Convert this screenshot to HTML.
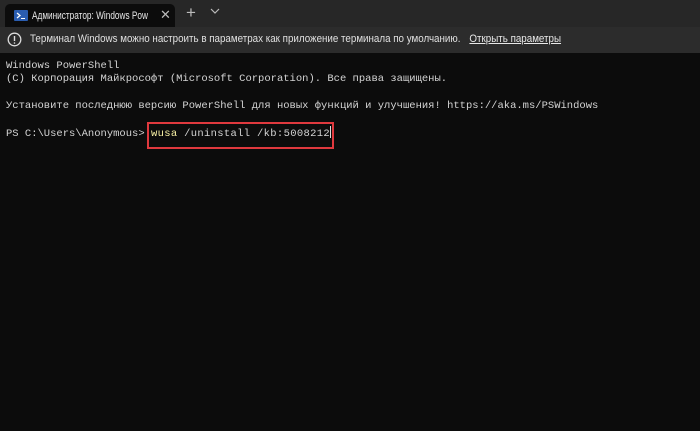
<!DOCTYPE html>
<html><head><meta charset="utf-8"><style>
body{margin:0;width:700px;height:431px;background:#0c0c0c;overflow:hidden;position:relative;font-family:"Liberation Sans","Noto Sans CJK SC",sans-serif}
.tabbar{position:absolute;left:0;top:0;width:700px;height:27px;background:#272727}
.tab{position:absolute;left:5px;top:4px;width:170px;height:23px;background:#0c0c0c;border-radius:5px 5px 0 0}
.tab .t{position:absolute;left:27px;top:6px;font-size:11px;color:#e8e8e8;white-space:nowrap;transform:scaleX(0.75);transform-origin:0 0}
.tab .x{position:absolute;left:155px;top:3px;font-size:13px;color:#bbb}
.plus{position:absolute;left:186px;top:3px;font-size:17px;color:#bbb}
.chev{position:absolute;left:210px;top:8px}
.info{position:absolute;left:0;top:27px;width:700px;height:26px;background:#2c2c2c;font-size:11px;color:#e0e0e0}
.info .m{position:absolute;left:30px;top:6px;white-space:nowrap;transform:scaleX(0.89);transform-origin:0 0}
.info u{color:#e8e8e8;margin-left:7px}
.term{position:absolute;left:6px;top:60px;font-family:"Liberation Mono","Noto Sans CJK SC",monospace;font-size:10.5px;line-height:13.3px;color:#d4d4d4;white-space:pre}
.cmd{letter-spacing:0.33px}
.y{color:#f9f1a5}
.box{position:absolute;left:147px;top:122px;width:183px;height:23px;border:2px solid #e0393e}
.cur{display:inline-block;width:1px;height:12px;background:#ddd;vertical-align:-2px}
</style></head><body>
<div class="tabbar">
 <div class="tab">
  <svg style="position:absolute;left:9px;top:6px" width="14" height="11"><rect width="14" height="11" rx="1" fill="#2a5db0"/><path d="M3 3l3 2.5-3 2.5" stroke="#fff" stroke-width="1.3" fill="none"/><path d="M7 8.5h4" stroke="#fff" stroke-width="1"/></svg>
  <span class="t">Администратор: Windows Pow</span><span class="x">✕</span>
 </div>
 <span class="plus">+</span>
 <svg class="chev" width="10" height="6"><path d="M1 1l4 4 4-4" stroke="#bbb" stroke-width="1.2" fill="none"/></svg>
</div>
<div class="info">
 <svg style="position:absolute;left:7px;top:5px" width="15" height="15"><circle cx="7.5" cy="7.5" r="6.3" stroke="#ddd" stroke-width="1.3" fill="none"/><path d="M7.5 4v5" stroke="#ddd" stroke-width="1.4"/><circle cx="7.5" cy="11" r=".8" fill="#ddd"/></svg>
 <span class="m">Терминал Windows можно настроить в параметрах как приложение терминала по умолчанию. <u>Открыть параметры</u></span>
</div>
<div class="term">Windows PowerShell
(C) Корпорация Майкрософт (Microsoft Corporation). Все права защищены.

Установите последнюю версию PowerShell для новых функций и улучшения! https://aka.ms/PSWindows

PS C:\Users\Anonymous&gt; <span class="cmd"><span class="y">wusa</span> /uninstall /kb:5008212</span><span class="cur"></span></div>
<div class="box"></div>
</body></html>
